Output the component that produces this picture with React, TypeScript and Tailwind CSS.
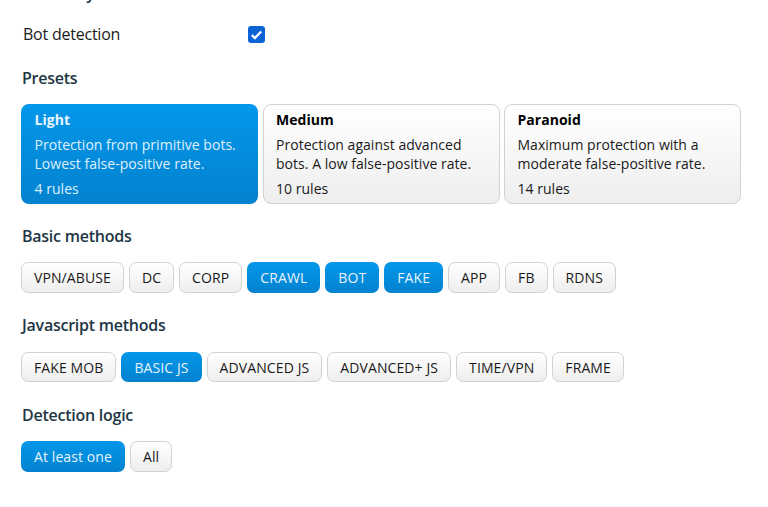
const presets = [
  { name: "Light", desc: ["Protection from primitive bots.", "Lowest false-positive rate."], rules: "4 rules", active: true },
  { name: "Medium", desc: ["Protection against advanced", "bots. A low false-positive rate."], rules: "10 rules", active: false },
  { name: "Paranoid", desc: ["Maximum protection with a", "moderate false-positive rate."], rules: "14 rules", active: false },
];

const basicMethods = [
  { label: "VPN/ABUSE", active: false },
  { label: "DC", active: false },
  { label: "CORP", active: false },
  { label: "CRAWL", active: true },
  { label: "BOT", active: true },
  { label: "FAKE", active: true },
  { label: "APP", active: false },
  { label: "FB", active: false },
  { label: "RDNS", active: false },
];

const jsMethods = [
  { label: "FAKE MOB", active: false },
  { label: "BASIC JS", active: true },
  { label: "ADVANCED JS", active: false },
  { label: "ADVANCED+ JS", active: false },
  { label: "TIME/VPN", active: false },
  { label: "FRAME", active: false },
];

const logic = [
  { label: "At least one", active: true },
  { label: "All", active: false },
];

const PillGroup = ({ items, height = "h-[31px]" }: { items: { label: string; active: boolean }[]; height?: string }) => (
  <div className={`flex gap-[5px] ${height}`}>
    {items.map((item) => (
      <button
        key={item.label}
        className={
          item.active
            ? "h-full px-[13px] rounded-[7px] text-[14px] tracking-[0.1px] text-[#e6f4fd] bg-gradient-to-b from-[#0497ea] to-[#0382cf]"
            : "h-full px-[12px] rounded-[7px] text-[14px] tracking-[0.1px] text-[#1a1a1a] border border-[#d2d2d2] bg-gradient-to-b from-white to-[#eeeeee]"
        }
      >
        {item.label}
      </button>
    ))}
  </div>
);

const Heading = ({ children }: { children: string }) => (
  <h3 className="text-[16px] leading-[22px] tracking-[-0.25px] font-semibold text-[#1e3644]">{children}</h3>
);

export default function App() {
  return (
    <div className="w-[768px] h-[507px] overflow-hidden bg-white pl-[21px] font-['Open_Sans',sans-serif]">
      <div className="h-[22px] pl-[1px] overflow-hidden">
        <div className="-mt-[18px]">
          <Heading>Summary</Heading>
        </div>
      </div>
      <div className="flex items-center h-[24px] pl-[2px]">
        <span className="w-[225px] text-[16px] tracking-[-0.23px] text-[#1a1a1a]">Bot detection</span>
        <span className="w-[17px] h-[17px] rounded-[3px] bg-[#0b63d6] flex items-center justify-center">
          <svg viewBox="0 0 16 16" className="w-[15px] h-[15px]" fill="none" stroke="white" strokeWidth="2.4">
            <path d="M3 8.5l3.3 3.3L13 4.8" />
          </svg>
        </span>
      </div>
      <div className="mt-[21px] pl-[1px]">
        <Heading>Presets</Heading>
      </div>
      <div className="mt-[15px] flex gap-[4.5px]">
        {presets.map((p) => (
          <div
            key={p.name}
            className={
              p.active
                ? "w-[237px] h-[100px] rounded-[8px] px-[13.5px] pt-[6px] text-[14px] leading-[19px] tracking-[0.03px] text-[#dff1fc] bg-gradient-to-b from-[#0497ea] to-[#0382cf]"
                : "w-[237px] h-[100px] rounded-[8px] px-[12.5px] pt-[5px] text-[14px] leading-[19px] tracking-[0.03px] text-[#1a1a1a] border border-[#d2d2d2] bg-gradient-to-b from-white to-[#eeeeee]"
            }
          >
            <div className={p.active ? "font-bold text-[#e6f4fd]" : "font-bold text-black"}>{p.name}</div>
            <div className="mt-[6px]">
              {p.desc.map((line) => (
                <div key={line}>{line}</div>
              ))}
            </div>
            <div className="mt-[6px]">{p.rules}</div>
          </div>
        ))}
      </div>
      <div className="mt-[21px] pl-[1px]">
        <Heading>Basic methods</Heading>
      </div>
      <div className="mt-[15px]">
        <PillGroup items={basicMethods} />
      </div>
      <div className="mt-[21px] pl-[1px]">
        <Heading>Javascript methods</Heading>
      </div>
      <div className="mt-[16px]">
        <PillGroup items={jsMethods} height="h-[30px]" />
      </div>
      <div className="mt-[22px] pl-[1px]">
        <Heading>Detection logic</Heading>
      </div>
      <div className="mt-[15px]">
        <PillGroup items={logic} />
      </div>
    </div>
  );
}
